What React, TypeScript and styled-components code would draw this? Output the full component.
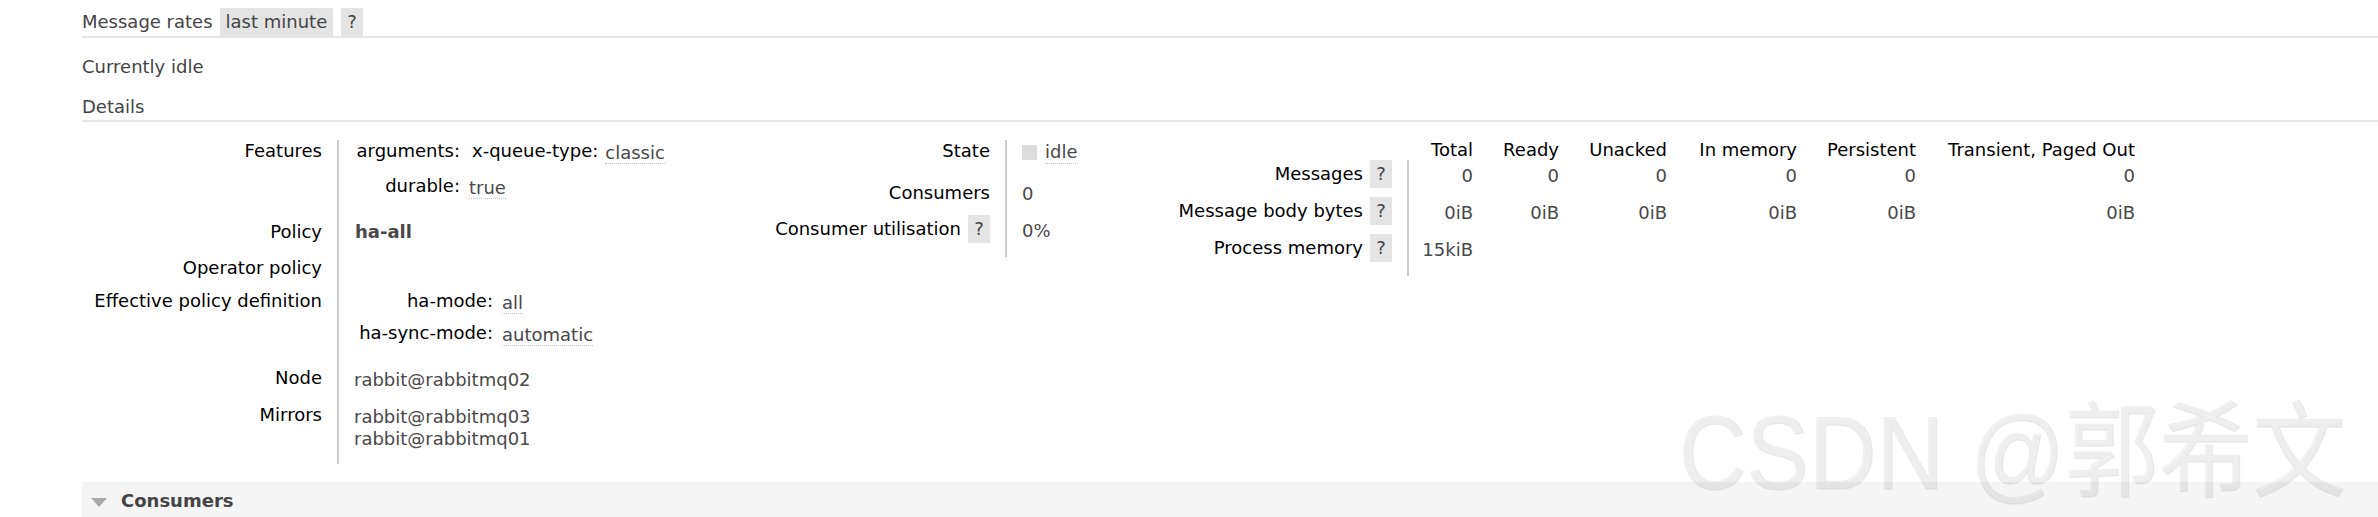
import React from 'react';
import styled, { createGlobalStyle } from 'styled-components';

const Global = createGlobalStyle`
  html, body { margin: 0; padding: 0; background: #fff; }
  body {
    font-family: "DejaVu Sans", Verdana, sans-serif;
    font-size: 18px;
    line-height: 22px;
    color: #484848;
  }
`;

const Page = styled.div`
  position: relative;
  padding: 8px 0 0 82px;
  height: 517px;
  box-sizing: border-box;
  overflow: hidden;
`;

const RatesBar = styled.div`
  display: flex;
  align-items: center;
  height: 28px;
  border-bottom: 2px solid #e6e6e6;
`;

const RatesLabel = styled.span`
  color: #444;
  margin-right: 7px;
`;

const Pill = styled.span<{ $gap?: number }>`
  display: inline-flex;
  align-items: center;
  justify-content: center;
  box-sizing: border-box;
  height: 28px;
  padding: 0 6px;
  background: #e4e4e4;
  color: #444;
  margin-right: ${p => p.$gap ?? 0}px;
`;

const Plain = styled.div`
  color: #444;
  margin-top: 18px;
`;

const SectionTitle = styled.div`
  color: #444;
  margin-top: 18px;
  padding-bottom: 2px;
  border-bottom: 2px solid #e6e6e6;
`;

const FactsArea = styled.div`
  display: flex;
  align-items: flex-start;
  margin-top: 17px;
`;

const Facts = styled.div<{ $w?: number; $top?: number }>`
  display: flex;
  flex-direction: column;
  flex: 0 0 ${p => (p.$w ? `${p.$w}px` : 'auto')};
  margin-top: ${p => p.$top ?? 0}px;
`;

const Row = styled.div<{ $h: number; $label: number }>`
  display: grid;
  grid-template-columns: ${p => p.$label}px auto;
  height: ${p => p.$h}px;
`;

const Label = styled.div`
  box-sizing: border-box;
  display: flex;
  justify-content: flex-end;
  align-items: flex-start;
  padding-right: 15px;
  color: #000;
  white-space: nowrap;
  border-right: 2px solid #ccc;
`;

const LabelLine = styled.span`
  display: inline-flex;
  align-items: center;
  gap: 7px;
  height: 28px;
`;

const Help = styled.span`
  display: inline-flex;
  align-items: center;
  justify-content: center;
  width: 22px;
  height: 28px;
  background: #e4e4e4;
  color: #444;
`;

const Value = styled.div<{ $pt?: number; $pl?: number }>`
  padding-left: ${p => p.$pl ?? 15}px;
  padding-top: ${p => p.$pt ?? 0}px;
  white-space: nowrap;
  color: #484848;
`;

const Strong = styled.span`
  font-weight: bold;
  color: #484848;
`;

const KV = styled.div<{ $key: number }>`
  display: grid;
  grid-template-columns: ${p => p.$key}px auto;
  column-gap: 9px;
`;

const KVKey = styled.div<{ $h: number }>`
  text-align: right;
  color: #000;
  height: ${p => p.$h}px;
  white-space: nowrap;
`;

const KVVal = styled.div`
  padding-top: 2px;
  white-space: nowrap;
  color: #484848;
`;

const InnerKV = styled.div`
  display: flex;
  gap: 7px;
  padding-left: 3px;
`;

const InnerKey = styled.span`
  color: #000;
`;

const Abbr = styled.span`
  border-bottom: 1px dotted #c4c4c4;
  color: #484848;
`;

const StateValue = styled.span`
  display: inline-flex;
  align-items: center;
  gap: 8px;
`;

const StateSquare = styled.span`
  display: inline-block;
  width: 15px;
  height: 15px;
  background: #dcdcdc;
`;

const Stats = styled.div`
  display: grid;
  grid-template-columns: 242px 80px 86px 108px 130px 119px 219px;
  grid-template-rows: 21px 37px 37px 42px;
`;

const HeadCell = styled.div`
  text-align: right;
  padding-right: 16px;
  color: #000;
  white-space: nowrap;
`;

const StatCell = styled.div`
  text-align: right;
  padding-right: 16px;
  padding-top: 5px;
  color: #484848;
  white-space: nowrap;
`;

const Section = styled.div`
  display: flex;
  align-items: center;
  gap: 14px;
  margin-top: 18px;
  padding: 8px 0 14px 9px;
  background: #f5f5f5;
`;

const SectionName = styled.span`
  font-weight: bold;
  color: #444;
`;

const Watermark = styled.div`
  position: absolute;
  left: 1679px;
  top: 401px;
  font-family: "Liberation Sans", "Noto Sans CJK SC", sans-serif;
  font-size: 104px;
  line-height: 1;
  white-space: nowrap;
  color: rgba(0, 0, 0, 0.035);
  -webkit-text-stroke: 1px rgba(0, 0, 0, 0.06);
  text-shadow: 1px 1px 0 rgba(0, 0, 0, 0.03);
  transform: scaleX(0.9);
  transform-origin: left top;
  pointer-events: none;
`;

const Triangle = () => (
  <svg width="16" height="10" viewBox="0 0 16 10" style={{ marginTop: 3 }}>
    <polygon points="0,0 16,0 8,9" fill="#a8a8a8" />
  </svg>
);

const statCols = ['Total', 'Ready', 'Unacked', 'In memory', 'Persistent', 'Transient, Paged Out'];

export default function App() {
  return (
    <>
      <Global />
      <Page>
        <RatesBar>
          <RatesLabel>Message rates</RatesLabel>
          <Pill $gap={8}>last minute</Pill>
          <Pill>?</Pill>
        </RatesBar>
        <Plain>Currently idle</Plain>
        <SectionTitle>Details</SectionTitle>

        <FactsArea>
          <Facts $w={680} $top={1}>
            <Row $h={81} $label={257}>
              <Label>Features</Label>
              <Value>
                <KV $key={106}>
                  <KVKey $h={35}>arguments:</KVKey>
                  <KVVal style={{ paddingTop: 0 }}>
                    <InnerKV>
                      <InnerKey>x-queue-type:</InnerKey>
                      <KVVal><Abbr>classic</Abbr></KVVal>
                    </InnerKV>
                  </KVVal>
                  <KVKey $h={46}>durable:</KVKey>
                  <KVVal><Abbr>true</Abbr></KVVal>
                </KV>
              </Value>
            </Row>
            <Row $h={36} $label={257}>
              <Label>Policy</Label>
              <Value $pl={16}><Strong>ha-all</Strong></Value>
            </Row>
            <Row $h={33} $label={257}>
              <Label>Operator policy</Label>
              <Value />
            </Row>
            <Row $h={77} $label={257}>
              <Label>Effective policy definition</Label>
              <Value>
                <KV $key={139}>
                  <KVKey $h={32}>ha-mode:</KVKey>
                  <KVVal><Abbr>all</Abbr></KVVal>
                  <KVKey $h={45}>ha-sync-mode:</KVKey>
                  <KVVal><Abbr>automatic</Abbr></KVVal>
                </KV>
              </Value>
            </Row>
            <Row $h={37} $label={257}>
              <Label>Node</Label>
              <Value $pt={2}>rabbit@rabbitmq02</Value>
            </Row>
            <Row $h={60} $label={257}>
              <Label>Mirrors</Label>
              <Value $pt={2}>
                rabbit@rabbitmq03
                <br />
                rabbit@rabbitmq01
              </Value>
            </Row>
          </Facts>

          <Facts $w={405} $top={1}>
            <Row $h={42} $label={245}>
              <Label>State</Label>
              <Value $pt={1}>
                <StateValue>
                  <StateSquare />
                  <Abbr>idle</Abbr>
                </StateValue>
              </Value>
            </Row>
            <Row $h={33} $label={245}>
              <Label>Consumers</Label>
              <Value $pt={1}>0</Value>
            </Row>
            <Row $h={42} $label={245}>
              <Label>
                <LabelLine>
                  Consumer utilisation <Help>?</Help>
                </LabelLine>
              </Label>
              <Value $pt={5}>0%</Value>
            </Row>
          </Facts>

          <Facts>
            <Stats>
              <div />
              {statCols.map(c => (
                <HeadCell key={c}>{c}</HeadCell>
              ))}

              <Label>
                <LabelLine>
                  Messages <Help>?</Help>
                </LabelLine>
              </Label>
              {statCols.map(c => (
                <StatCell key={c}>0</StatCell>
              ))}

              <Label>
                <LabelLine>
                  Message body bytes <Help>?</Help>
                </LabelLine>
              </Label>
              {statCols.map(c => (
                <StatCell key={c}>0iB</StatCell>
              ))}

              <Label>
                <LabelLine>
                  Process memory <Help>?</Help>
                </LabelLine>
              </Label>
              <StatCell>15kiB</StatCell>
            </Stats>
          </Facts>
        </FactsArea>

        <Section>
          <Triangle />
          <SectionName>Consumers</SectionName>
        </Section>

        <Watermark>CSDN @郭希文</Watermark>
      </Page>
    </>
  );
}
